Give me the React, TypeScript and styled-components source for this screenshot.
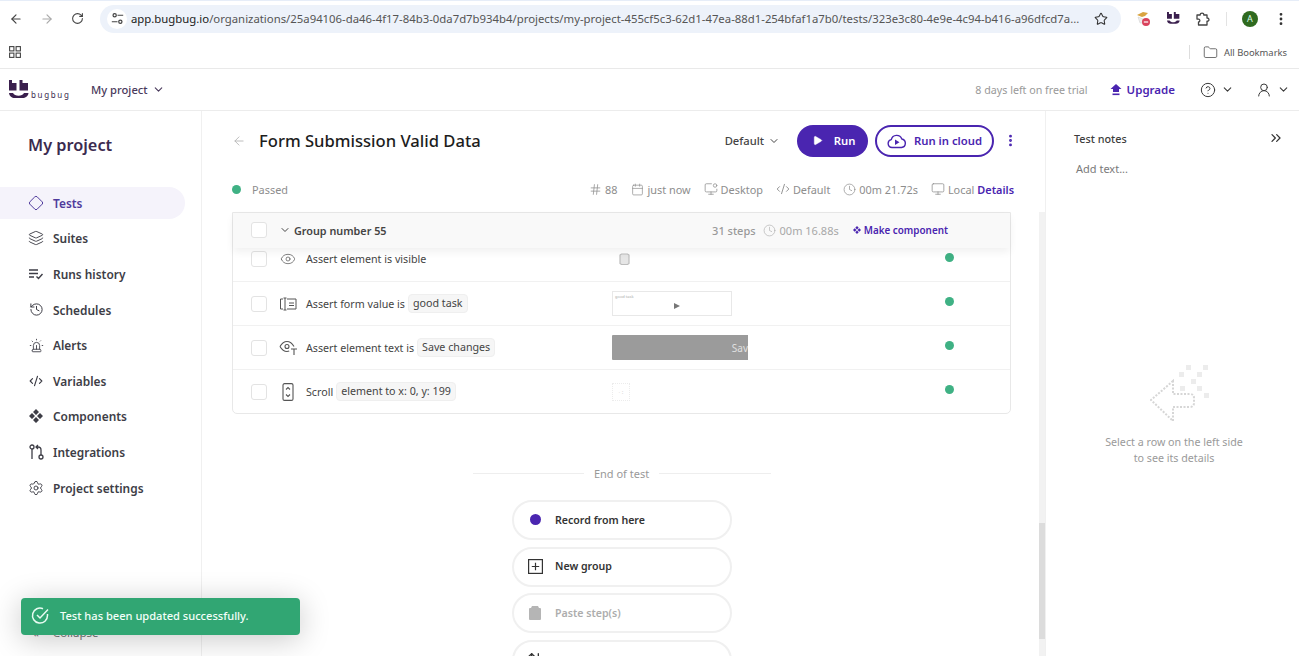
import React from "react";
import styled, { createGlobalStyle } from "styled-components";
import {
  ArrowLeft, ArrowRight, RotateCw, Star, EllipsisVertical, Diamond, Layers, History, Siren,
  CodeXml, Settings, ChevronDown, ChevronsRight, CircleHelp, UserRound, Play, Hash, Calendar,
  MonitorDot, Clock, Monitor, Eye, Folder, ArrowUpDown,
} from "lucide-react";

const Global = createGlobalStyle`
  html, body { margin: 0; padding: 0; background: #fff; }
  body { font-family: "Noto Sans", "Open Sans", sans-serif; color: #333; }
  * { box-sizing: border-box; }
`;

const purple = "#4a25b0";
const Page = styled.div`width: 1299px; height: 656px; overflow: hidden; position: relative; display: flex; flex-direction: column; background: #fff;`;

const Chrome = styled.header`height: 69px; flex: none; border-bottom: 1px solid #e9e9e9; border-top: 1px solid #e6edf8; display: flex; flex-direction: column;`;
const UrlRow = styled.div`height: 35px; flex: none; display: flex; align-items: center; padding: 0 0 0 9px; color: #444;`;
const NavIcons = styled.div`display: flex; align-items: center; gap: 17px; width: 91px; flex: none;`;
const AddressBar = styled.div`width: 1021px; height: 28px; flex: none; border-radius: 14px; background: #edf2fa; display: flex; align-items: center; padding: 0 13px 0 7px; font-size: 11.35px; color: #555;`;
const SiteChip = styled.span`width: 20px; height: 20px; border-radius: 50%; background: #fff; display: flex; align-items: center; justify-content: center; margin-right: 4px; flex: none;`;
const Url = styled.span`flex: 1; white-space: nowrap; min-width: 0;`;
const Domain = styled.span`color: #222;`;
const ExtIcons = styled.div`display: flex; align-items: center; flex: 1; padding-left: 14px; gap: 15px;`;
const Divider = styled.span`width: 1px; height: 14px; background: #e3e3e3;`;
const Avatar = styled.span`width: 16px; height: 16px; border-radius: 50%; background: #2f6a1f; color: #dfe; font-size: 9px; display: flex; align-items: center; justify-content: center;`;
const BookmarkRow = styled.div`flex: 1; display: flex; align-items: center; justify-content: space-between; padding: 0 12px 0 9px;`;
const BookmarkEnd = styled.div`display: flex; align-items: center; gap: 6px; font-size: 9.4px; color: #555;`;
const BookmarkSep = styled.span`width: 1px; height: 14px; background: #ddd; margin-right: 7px;`;

const TopBar = styled.div`height: 42px; flex: none; border-bottom: 1px solid #ececec; display: flex; align-items: center; padding: 0 9px 0 9px;`;
const LogoBox = styled.div`display: flex; align-items: flex-end; width: 82px; flex: none; height: 20px;`;
const LogoWord = styled.span`font-size: 8px; letter-spacing: 1.65px; color: #3a2a4d; margin-left: 2px; line-height: 10px;`;
const ProjectPicker = styled.div`display: flex; align-items: center; gap: 4px; font-size: 11.2px; font-weight: 500; color: #4a3a5c;`;
const Spacer = styled.div`flex: 1;`;
const Trial = styled.span`font-size: 10.7px; color: #999;`;
const Upgrade = styled.span`display: flex; align-items: center; gap: 5px; margin-left: 22px; font-size: 11.5px; font-weight: 600; color: ${purple};`;
const MenuIcon = styled.span<{ $ml: number }>`display: flex; align-items: center; gap: 5px; margin-left: ${p => p.$ml}px; color: #3a3a3a;`;

const Body = styled.div`flex: 1; display: flex; min-height: 0;`;
const Sidebar = styled.aside`width: 202px; flex: none; border-right: 1px solid #f0f0f0; display: flex; flex-direction: column;`;
const SideTitle = styled.h2`margin: 20px 0 0 28px; font-size: 16.3px; line-height: 28px; font-weight: 600; color: #3b2b4f;`;
const Nav = styled.nav`margin-top: 28px; display: flex; flex-direction: column; gap: 4px;`;
const NavItem = styled.div<{ $active?: boolean }>`height: 31.6px; width: 185px; display: flex; align-items: center; gap: 9px; padding-left: 28px; border-radius: 0 16px 16px 0; font-size: 11.9px; font-weight: 600; color: ${p => (p.$active ? "#4f3a9c" : "#3d3d46")}; background: ${p => (p.$active ? "#f5f3fb" : "transparent")};`;
const NavIcon = styled.span`width: 16px; height: 16px; display: flex; align-items: center; justify-content: center; flex: none;`;
const Collapse = styled.div`margin-top: auto; margin-bottom: 16px; margin-left: 33px; display: flex; gap: 14px; align-items: center; font-size: 11.5px; color: #777; line-height: 14px;`;

const Main = styled.main`width: 843px; flex: none; display: flex; flex-direction: column; padding: 13px 31px 0 30px; position: relative;`;
const TitleRow = styled.div`height: 33px; flex: none; display: flex; align-items: center;`;
const BackIcon = styled.span`display: flex; color: #b5b5b5; width: 27px; flex: none;`;
const Title = styled.h1`margin: 0; font-size: 16.6px; font-weight: 500; color: #1d1d1d; flex: 1;`;
const EnvPicker = styled.span`display: flex; align-items: center; gap: 4px; font-size: 11.2px; font-weight: 500; color: #444; margin-right: 17px;`;
const RunButton = styled.button`width: 71px; height: 32px; border: 0; border-radius: 16px; background: ${purple}; color: #fff; font: 600 11.3px "Noto Sans", sans-serif; display: flex; align-items: center; justify-content: center; gap: 11px; padding: 0 0 0 2px;`;
const CloudButton = styled.button`width: 119px; height: 32px; margin-left: 7px; border: 2px solid ${purple}; border-radius: 16px; background: #fff; color: ${purple}; font: 600 11.3px "Noto Sans", sans-serif; display: flex; align-items: center; justify-content: center; gap: 8px; padding: 0;`;
const KebabWrap = styled.span`display: flex; color: ${purple}; margin-left: 12px; width: 8px; justify-content: center; svg { flex: none; }`;

const StatusRow = styled.div`height: 24px; margin-top: 20px; flex: none; display: flex; align-items: center; font-size: 10.9px; color: #8d8d8d;`;
const Dot = styled.span<{ $size?: number; $color?: string }>`width: ${p => p.$size ?? 9}px; height: ${p => p.$size ?? 9}px; border-radius: 50%; background: ${p => p.$color ?? "#3fb184"}; flex: none; display: block;`;
const Passed = styled.span`margin-left: 11px; flex: 1;`;
const Meta = styled.span<{ $ml?: number }>`display: flex; align-items: center; gap: 3px; margin-left: ${p => p.$ml ?? 13}px; color: #8d8d8d;`;
const DetailsLink = styled.span`margin-left: 3px; font-weight: 600; color: ${purple};`;

const Card = styled.section`margin-top: 11px; width: 779px; flex: none; border: 1px solid #e8e8e8; border-radius: 0 0 5px 5px; position: relative;`;
const GroupHeader = styled.div`height: 35px; background: #f9f9f9; display: flex; align-items: center; padding: 0 0 1px 18px; box-shadow: 0 4px 8px rgba(0,0,0,.06); position: relative; z-index: 1;`;
const Checkbox = styled.span`width: 16px; height: 16px; border: 1.5px solid #e3e3e3; border-radius: 3px; background: #fff; flex: none; display: block;`;
const GroupName = styled.span`display: flex; align-items: center; gap: 3px; margin-left: 12px; font-size: 10.8px; font-weight: 600; color: #444; flex: 1;`;
const GroupStat = styled.span`display: flex; align-items: center; gap: 4px; font-size: 11px; color: #a8a8a8;`;
const StepCount = styled.span`margin-right: 3px; font-weight: 500; color: #999;`;
const MakeComponent = styled.span`display: flex; align-items: center; gap: 3px; margin: 0 62px 0 14px; font-size: 9.9px; font-weight: 600; color: ${purple};`;

const Row = styled.div<{ $first?: boolean }>`height: ${p => (p.$first ? 34 : 44)}px; display: flex; align-items: ${p => (p.$first ? "flex-start" : "center")}; padding-top: ${p => (p.$first ? 1 : 0)}px; border-bottom: 1px solid #f1f1f1; &:last-child { border-bottom: 0; height: 43px; }`;
const StepMain = styled.div`width: 379px; flex: none; display: flex; align-items: center; padding-left: 18px;`;
const StepIcon = styled.span`width: 20px; height: 20px; margin: 0 8px 0 11px; display: flex; align-items: center; justify-content: center; color: #555; flex: none;`;
const StepText = styled.span`display: flex; align-items: center; gap: 3px; font-size: 10.7px; color: #444; white-space: nowrap;`;
const Param = styled.span`background: #f6f6f6; border: 1px solid #efefef; border-radius: 4px; padding: 0 4px; height: 19px; line-height: 17px;`;
const ThumbCell = styled.div`width: 333px; flex: none; display: flex; align-items: center;`;
const DotCell = styled.div<{ $first?: boolean }>`margin-top: ${p => (p.$first ? 4 : -4)}px;`;
const MiniThumb = styled.span`display: flex; margin: 4px 0 0 7px;`;
const InputThumb = styled.span`width: 120px; height: 25px; border: 1px solid #e8e8e8; position: relative; display: block; font-size: 4px; line-height: 5px; color: #aaa; padding: 2px;`;
const Cursor = styled.span`position: absolute; left: 61px; top: 11px; width: 0; height: 0; border-left: 6px solid #777; border-top: 3px solid transparent; border-bottom: 3px solid transparent;`;
const ButtonThumb = styled.span`width: 136px; height: 25px; background: #9b9b9b; color: #e0e0e0; font-size: 10px; display: flex; align-items: center; justify-content: flex-end; overflow: hidden; white-space: nowrap; border-radius: 1px 0 0 1px;`;
const ScrollThumb = styled.span`width: 18px; height: 18px; border: 1px dotted #ececec; display: flex; align-items: center; justify-content: center; color: #ccc; font-size: 6px; line-height: 6px;`;

const EndBlock = styled.div`margin-top: 49px; display: flex; flex-direction: column; align-items: center; width: 780px;`;
const EndLabel = styled.div`width: 298px; margin-left: -1px; display: flex; align-items: center; gap: 10px; font-size: 11px; color: #999; height: 20px; white-space: nowrap; &::before, &::after { content: ""; flex: 1; height: 1px; background: #eee; }`;
const ActionList = styled.div`margin-top: 17px; display: flex; flex-direction: column; gap: 6.5px;`;
const ActionButton = styled.div<{ $off?: boolean }>`width: 220px; height: 40px; flex: none; border: 2px solid #f0f0f0; border-radius: 20px; display: flex; align-items: center; padding: 0 0 1px 13px; gap: 12px; font-size: 10.6px; font-weight: 600; color: ${p => (p.$off ? "#adadad" : "#333")};`;
const ActionIcon = styled.span`width: 16px; display: flex; justify-content: center; flex: none;`;

const Scrollbar = styled.div`position: absolute; left: 837px; top: 101px; bottom: 0; width: 6px; background: #f2f2f2;`;
const ScrollbarThumb = styled.div`position: absolute; top: 311px; height: 116px; width: 100%; background: #dcdcdc;`;

const Notes = styled.aside`flex: 1; border-left: 1px solid #f0f0f0; display: flex; flex-direction: column; padding: 19px 15px 0 28px;`;
const NotesHead = styled.div`display: flex; justify-content: space-between; align-items: center; height: 16px; font-size: 10.8px; font-weight: 500; color: #3d3d3d;`;
const AddText = styled.div`margin: 15px 0 0 2px; font-size: 11px; color: #7a7a7a; line-height: 16px;`;
const Empty = styled.div`margin-top: 187px; margin-left: -10px; display: flex; flex-direction: column; align-items: center; font-size: 10.7px; line-height: 15.5px; color: #9a9a9a; text-align: center;`;
const EmptyArt = styled.div`height: 71px; display: flex; margin-left: 14px;`;

const Toast = styled.div`position: absolute; left: 21px; top: 598px; width: 279px; height: 37px; background: #31a673; border-radius: 4px; color: #f3fff9; display: flex; align-items: center; gap: 10px; padding: 0 0 2px 10px; font-size: 11.1px; font-weight: 500; box-shadow: 0 4px 30px rgba(0,0,0,.22);`;

const BugLogo = ({ s = 20 }: { s?: number }) => (
  <svg width={s} height={s} viewBox="0 0 20 20" fill="#3a1f4d">
    <path d="M0 0h3v3h4.500v7.500H0zM10.500 0h3v3H19v7.500h-8.500z" />
    <path d="M0 13h4c1 1.800 3 2.800 5.500 2.800S14 14.800 15 13h4.500c-.4 3.400-3 5-6 5h-8C3 18 .4 16.400 0 13z" />
  </svg>
);
const Tune = () => (
  <svg width="13" height="13" viewBox="0 0 16 16" fill="none" stroke="#444" strokeWidth="1.500">
    <circle cx="4.500" cy="4" r="2" /><path d="M8 4h7M1 12h7" /><circle cx="11.500" cy="12" r="2" />
  </svg>
);
const Grid = () => (
  <svg width="12" height="12" viewBox="0 0 12 12" fill="none" stroke="#444" strokeWidth="1.100">
    <rect x=".6" y=".6" width="4.300" height="4.300" /><rect x="7.100" y=".6" width="4.300" height="4.300" />
    <rect x=".6" y="7.100" width="4.300" height="4.300" /><rect x="7.100" y="7.100" width="4.300" height="4.300" />
  </svg>
);
const Ext = () => (
  <svg width="17" height="20" viewBox="0 0 17 20">
    <path d="M2 6l6-3 5 1-3 3-3 1z" fill="#d9a441" /><path d="M3 8l5 2v4H5z" fill="#eee" stroke="#ccc" strokeWidth=".5" />
    <circle cx="11" cy="13" r="4" fill="#d9425c" /><rect x="8.800" y="12.400" width="4.400" height="1.200" fill="#fff" />
  </svg>
);
const PuzzleOutline = () => (
  <svg width="16" height="16" viewBox="0 0 16 16" fill="none" stroke="#444" strokeWidth="1.300" strokeLinejoin="round">
    <path d="M2 4h3.200c-.3-2.600 4-2.600 3.600 0H12v3c2.600-.3 2.600 3.600 0 3.200V14H3.500v-3c1.800.2 1.800-3 0-2.800L2 8z" />
  </svg>
);
const RunsIcon = () => (
  <svg width="16" height="12" viewBox="0 0 16 12" fill="none" stroke="#3d3d46" strokeWidth="1.400">
    <path d="M1 2h9M1 5.500h9M1 9h5M8.500 8.500l2 2 4-4.500" />
  </svg>
);
const ComponentsIcon = ({ s = 14, c = "#3d3d46" }: { s?: number; c?: string }) => (
  <svg width={s} height={s} viewBox="0 0 14 14" fill={c}>
    <path d="M7 0l3 3-3 3-3-3zM3 4l3 3-3 3-3-3zM11 4l3 3-3 3-3-3zM7 8l3 3-3 3-3-3z" />
  </svg>
);
const IntegrationsIcon = () => (
  <svg width="15" height="16" viewBox="0 0 15 16" fill="none" stroke="#3d3d46" strokeWidth="1.300">
    <circle cx="3" cy="3" r="2" /><path d="M3 5v10" /><circle cx="12" cy="13" r="2" /><path d="M12 11V6c0-2-1-3-3-3H7.500M9 1L7 3l2 2" />
  </svg>
);
const UpgradeIcon = () => (
  <svg width="12" height="13" viewBox="0 0 12 13" fill={purple}><path d="M6 1l5.500 5H9v3H3V6H.5z" /><rect x="2.500" y="10.500" width="7" height="1.600" /></svg>
);
const CloudPlay = () => (
  <svg width="19" height="16" viewBox="0 0 19 16" fill="none" stroke={purple} strokeWidth="1.400" strokeLinejoin="round">
    <path d="M5 14.500a4 4 0 0 1-.7-7.900 5.500 5.500 0 0 1 10.500-.6 4.300 4.300 0 0 1-.3 8.500z" />
    <path d="M8 6.500l4.500 2.800L8 12z" fill={purple} stroke="none" />
  </svg>
);
const FormIcon = () => (
  <svg width="18" height="14" viewBox="0 0 18 14" fill="none" stroke="#555" strokeWidth="1">
    <path d="M4 2H1.500v10H4M6 1v12M4.500 1h3M4.500 13h3M8 2h9v10H8M10 6h5M10 8.500h5" />
  </svg>
);
const EyeText = () => (
  <svg width="19" height="16" viewBox="0 0 19 16" fill="none" stroke="#555" strokeWidth="1.100">
    <path d="M1 6.500C3 3 5.500 1.500 8 1.500s5 1.500 7 5M1 6.500c2 3.500 4.500 5 7 5 .8 0 1.500-.1 2.200-.4" /><circle cx="8" cy="6.500" r="2" /><path d="M12 9h6M15 9v6" />
  </svg>
);
const ScrollIcon = () => (
  <svg width="12" height="18" viewBox="0 0 12 18" fill="none" stroke="#555" strokeWidth="1.100">
    <rect x="1" y=".6" width="10" height="16.800" rx="1.500" /><path d="M4 6.500l2-2 2 2M4 11.500l2 2 2-2" />
  </svg>
);
const CheckRound = () => (
  <svg width="19" height="19" viewBox="0 0 19 19" fill="none" stroke="#e8fbf2" strokeWidth="1.500">
    <path d="M16.500 8v1.500a7.500 7.500 0 1 1-4.500-6.800" /><path d="M6 9l3 3 8-8.500" />
  </svg>
);
const PasteIcon = () => (
  <svg width="12" height="14" viewBox="0 0 12 14" fill="#b5b5b5"><path d="M3 0h6l1 2h1a1 1 0 0 1 1 1v10a1 1 0 0 1-1 1H1a1 1 0 0 1-1-1V3a1 1 0 0 1 1-1h1z" /></svg>
);
const NewGroupIcon = () => (
  <svg width="15" height="15" viewBox="0 0 15 15" fill="none" stroke="#333" strokeWidth="1.200">
    <rect x=".6" y=".6" width="13.800" height="13.800" /><path d="M7.500 3.800v7.400M3.800 7.500h7.400" />
  </svg>
);
const ClipThumb = () => (
  <svg width="11" height="12" viewBox="0 0 11 12" fill="#e6e6e6" stroke="#bdbdbd" strokeWidth="1.200">
    <path d="M2.500 1h6l1.500 1v8.500l-1.500 1h-6L1 10.500V2z" />
  </svg>
);
const EmptyArrow = () => (
  <svg width="62" height="62" viewBox="0 0 62 62" fill="none">
    <path d="M23 17L1 36l22 21V43h17c3 0 4-2 4-4v-5c0-2-1-4-4-4H23z" stroke="#d6d6d6" strokeWidth="2" strokeDasharray="2 1.500" />
    <g fill="#ececec">
      <rect x="36" y="1" width="5" height="5" /><rect x="53" y="1" width="5" height="5" /><rect x="29" y="8" width="5" height="5" />
      <rect x="47" y="8" width="5" height="5" /><rect x="41" y="15" width="5" height="5" /><rect x="30" y="22" width="5" height="5" />
      <rect x="47" y="22" width="5" height="5" /><rect x="54" y="29" width="5" height="5" />
    </g>
  </svg>
);

const navItems: [string, React.ReactNode][] = [
  ["Tests", <Diamond size={16} strokeWidth={1.5} color="#4f3a9c" />],
  ["Suites", <Layers size={16} strokeWidth={1.4} color="#3d3d46" />],
  ["Runs history", <RunsIcon />],
  ["Schedules", <History size={15} strokeWidth={1.6} color="#3d3d46" />],
  ["Alerts", <Siren size={15} strokeWidth={1.4} color="#3d3d46" />],
  ["Variables", <CodeXml size={14} strokeWidth={2} color="#3d3d46" />],
  ["Components", <ComponentsIcon />],
  ["Integrations", <IntegrationsIcon />],
  ["Project settings", <Settings size={16} strokeWidth={1.4} color="#3d3d46" />],
];

export default function App() {
  return (
    <Page>
      <Global />
      <Chrome>
        <UrlRow>
          <NavIcons>
            <ArrowLeft size={14} strokeWidth={2} color="#444" />
            <ArrowRight size={14} strokeWidth={2} color="#aaa" />
            <RotateCw size={13} strokeWidth={2} color="#444" />
          </NavIcons>
          <AddressBar>
            <SiteChip><Tune /></SiteChip>
            <Url><Domain>app.bugbug.io</Domain>/organizations/25a94106-da46-4f17-84b3-0da7d7b934b4/projects/my-project-455cf5c3-62d1-47ea-88d1-254bfaf1a7b0/tests/323e3c80-4e9e-4c94-b416-a96dfcd7a...</Url>
            <Star size={14} strokeWidth={1.8} color="#333" />
          </AddressBar>
          <ExtIcons>
            <Ext />
            <BugLogo s={13} />
            <PuzzleOutline />
            <Divider />
            <Avatar>A</Avatar>
            <EllipsisVertical size={16} strokeWidth={2.2} color="#333" />
          </ExtIcons>
        </UrlRow>
        <BookmarkRow>
          <Grid />
          <BookmarkEnd>
            <BookmarkSep />
            <Folder size={15} strokeWidth={1.2} color="#444" />
            <span>All Bookmarks</span>
          </BookmarkEnd>
        </BookmarkRow>
      </Chrome>
      <TopBar>
        <LogoBox><BugLogo /><LogoWord>bugbug</LogoWord></LogoBox>
        <ProjectPicker>My project <ChevronDown size={13} strokeWidth={2} /></ProjectPicker>
        <Spacer />
        <Trial>8 days left on free trial</Trial>
        <Upgrade><UpgradeIcon />Upgrade</Upgrade>
        <MenuIcon $ml={25}><CircleHelp size={16} strokeWidth={1.5} /><ChevronDown size={13} strokeWidth={2} /></MenuIcon>
        <MenuIcon $ml={22}><UserRound size={16} strokeWidth={1.5} /><ChevronDown size={13} strokeWidth={2} /></MenuIcon>
      </TopBar>
      <Body>
        <Sidebar>
          <SideTitle>My project</SideTitle>
          <Nav>
            {navItems.map(([label, icon], i) => (
              <NavItem key={label} $active={i === 0}><NavIcon>{icon}</NavIcon>{label}</NavItem>
            ))}
          </Nav>
          <Collapse><span>«</span><span>Collapse</span></Collapse>
        </Sidebar>
        <Main>
          <TitleRow>
            <BackIcon><ArrowLeft size={14} strokeWidth={1.5} /></BackIcon>
            <Title>Form Submission Valid Data</Title>
            <EnvPicker>Default <ChevronDown size={12} strokeWidth={2} /></EnvPicker>
            <RunButton><Play size={11} fill="#fff" strokeWidth={1} />Run</RunButton>
            <CloudButton><CloudPlay />Run in cloud</CloudButton>
            <KebabWrap><EllipsisVertical size={15} strokeWidth={2.6} /></KebabWrap>
          </TitleRow>
          <StatusRow>
            <Dot />
            <Passed>Passed</Passed>
            <Meta><Hash size={13} strokeWidth={1.4} />88</Meta>
            <Meta $ml={14}><Calendar size={13} strokeWidth={1.3} />just now</Meta>
            <Meta><MonitorDot size={14} strokeWidth={1.3} />Desktop</Meta>
            <Meta><CodeXml size={14} strokeWidth={1.6} />Default</Meta>
            <Meta><Clock size={13} strokeWidth={1.3} />00m 21.72s</Meta>
            <Meta><Monitor size={14} strokeWidth={1.3} />Local</Meta>
            <DetailsLink>Details</DetailsLink>
          </StatusRow>
          <Card>
            <GroupHeader>
              <Checkbox />
              <GroupName><ChevronDown size={12} strokeWidth={2} />Group number 55</GroupName>
              <GroupStat><StepCount>31 steps</StepCount><Clock size={13} strokeWidth={1.1} />00m 16.88s</GroupStat>
              <MakeComponent><ComponentsIcon s={8} c={purple} />Make component</MakeComponent>
            </GroupHeader>
            <Row $first>
              <StepMain><Checkbox /><StepIcon><Eye size={16} strokeWidth={1.1} /></StepIcon><StepText>Assert element is visible</StepText></StepMain>
              <ThumbCell><MiniThumb><ClipThumb /></MiniThumb></ThumbCell>
              <DotCell $first><Dot /></DotCell>
            </Row>
            <Row>
              <StepMain><Checkbox /><StepIcon><FormIcon /></StepIcon><StepText>Assert form value is <Param>good task</Param></StepText></StepMain>
              <ThumbCell><InputThumb>good task<Cursor /></InputThumb></ThumbCell>
              <DotCell><Dot /></DotCell>
            </Row>
            <Row>
              <StepMain><Checkbox /><StepIcon><EyeText /></StepIcon><StepText>Assert element text is <Param>Save changes</Param></StepText></StepMain>
              <ThumbCell><ButtonThumb>Sav</ButtonThumb></ThumbCell>
              <DotCell><Dot /></DotCell>
            </Row>
            <Row>
              <StepMain><Checkbox /><StepIcon><ScrollIcon /></StepIcon><StepText>Scroll <Param>element to x: 0, y: 199</Param></StepText></StepMain>
              <ThumbCell><ScrollThumb>· :</ScrollThumb></ThumbCell>
              <DotCell><Dot /></DotCell>
            </Row>
          </Card>
          <EndBlock>
            <EndLabel>End of test</EndLabel>
            <ActionList>
              <ActionButton><ActionIcon><Dot $size={11} $color={purple} /></ActionIcon>Record from here</ActionButton>
              <ActionButton><ActionIcon><NewGroupIcon /></ActionIcon>New group</ActionButton>
              <ActionButton $off><ActionIcon><PasteIcon /></ActionIcon>Paste step(s)</ActionButton>
              <ActionButton><ActionIcon><ArrowUpDown size={18} strokeWidth={2} color="#333" /></ActionIcon></ActionButton>
            </ActionList>
          </EndBlock>
          <Scrollbar><ScrollbarThumb /></Scrollbar>
        </Main>
        <Notes>
          <NotesHead>Test notes<ChevronsRight size={16} strokeWidth={1.9} color="#333" /></NotesHead>
          <AddText>Add text...</AddText>
          <Empty>
            <EmptyArt><EmptyArrow /></EmptyArt>
            <div>Select a row on the left side<br />to see its details</div>
          </Empty>
        </Notes>
      </Body>
      <Toast><CheckRound />Test has been updated successfully.</Toast>
    </Page>
  );
}
